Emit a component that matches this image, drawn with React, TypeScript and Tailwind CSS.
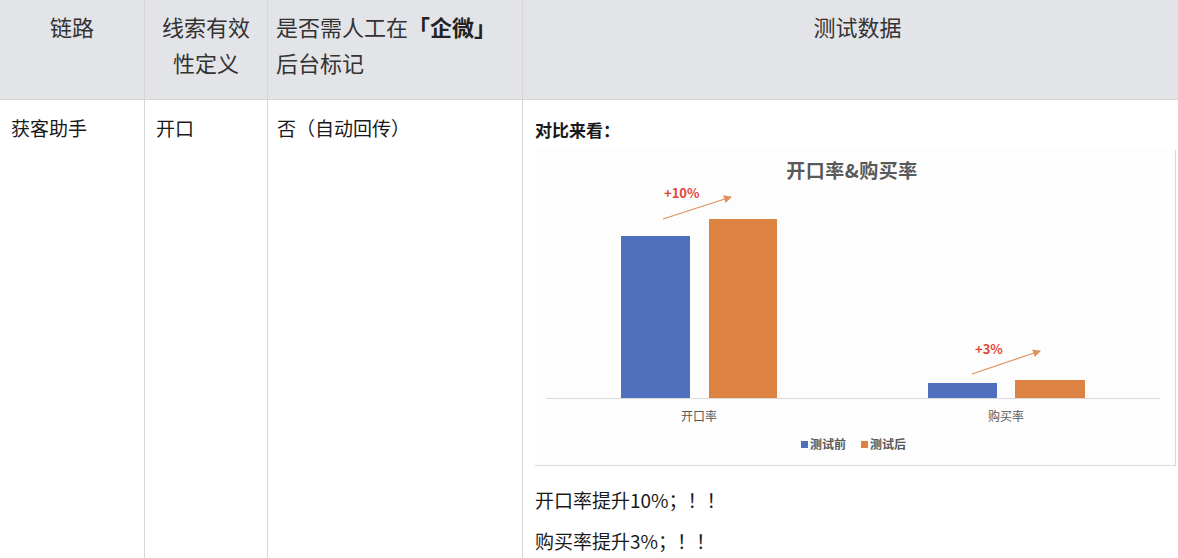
import React from "react";

const FONT = '"Noto Sans CJK SC", "Noto Sans", "Liberation Sans", sans-serif';

function Chart() {
  const gray = "#595959";
  return (
    <div className="relative h-[316px] w-[641px] border-r border-b border-[#d9d9d9] bg-[#fdfdfd]">
      <svg width="640" height="316" viewBox="0 0 640 316" style={{ fontFamily: FONT }}>
        <defs>
          <marker id="ah" markerWidth="8" markerHeight="8" refX="7" refY="4" orient="auto" markerUnits="userSpaceOnUse">
            <path d="M0,0 L8,4 L0,8 z" fill="#e0905a" />
          </marker>
        </defs>
        <text x="317" y="28" textAnchor="middle" fontSize="19" fontWeight="700" fill={gray} letterSpacing="0.5">
          开口率&amp;购买率
        </text>
        <line x1="11" y1="248.5" x2="625" y2="248.5" stroke="#d9d9d9" strokeWidth="1" />
        <rect x="86" y="86" width="69" height="162" fill="#4f71bd" />
        <rect x="174" y="69" width="68" height="179" fill="#dc8243" />
        <rect x="393" y="233" width="69" height="15" fill="#4f71bd" />
        <rect x="480" y="230" width="70" height="18" fill="#dc8243" />
        <line x1="128" y1="69" x2="196" y2="47" stroke="#e0905a" strokeWidth="1.2" markerEnd="url(#ah)" />
        <line x1="437" y1="224" x2="505" y2="201" stroke="#e0905a" strokeWidth="1.2" markerEnd="url(#ah)" />
        <text x="129" y="48" fontSize="13" fontWeight="700" fill="#e5453a">+10%</text>
        <text x="440" y="204" fontSize="13" fontWeight="700" fill="#e5453a">+3%</text>
        <text x="164" y="271" textAnchor="middle" fontSize="12" fill={gray}>开口率</text>
        <text x="471" y="271" textAnchor="middle" fontSize="12" fill={gray}>购买率</text>
        <rect x="266" y="291" width="7" height="7" fill="#4f71bd" />
        <text x="275" y="299" fontSize="12" fontWeight="700" fill={gray}>测试前</text>
        <rect x="326" y="291" width="7" height="7" fill="#dc8243" />
        <text x="335" y="299" fontSize="12" fontWeight="700" fill={gray}>测试后</text>
      </svg>
    </div>
  );
}

export default function App() {
  return (
    <div
      className="h-[558px] w-[1178px] overflow-hidden bg-white text-[#1a1a1a]"
      style={{ fontFamily: FONT }}
    >
      <div className="grid w-[1193px] grid-cols-[145px_123px_255px_670px]">
        <div className="h-[100px] border-r border-b border-[#d6d6d9] bg-[#e3e4e8] pt-[8px] text-center text-[22px] leading-[36px] text-[#333]">
          链路
        </div>
        <div className="h-[100px] border-r border-b border-[#d6d6d9] bg-[#e3e4e8] pt-[8px] text-center text-[22px] leading-[36px] text-[#333]">
          线索有效
          <br />
          性定义
        </div>
        <div className="h-[100px] border-r border-b border-[#d6d6d9] bg-[#e3e4e8] pl-[8px] pt-[8px] text-[22px] leading-[36px] text-[#333]">
          是否需人工在<span className="font-bold text-[#222]">「企微」</span>
          <br />
          后台标记
        </div>
        <div className="h-[100px] border-r border-b border-[#d6d6d9] bg-[#e3e4e8] pt-[8px] text-center text-[22px] leading-[36px] text-[#333]">
          测试数据
        </div>

        <div className="h-[458px] border-r border-[#d6d6d9] pl-[11px] pt-[14px] text-[19px] leading-[28px]">
          获客助手
        </div>
        <div className="h-[458px] border-r border-[#d6d6d9] pl-[11px] pt-[14px] text-[19px] leading-[28px]">
          开口
        </div>
        <div className="h-[458px] border-r border-[#d6d6d9] pl-[9px] pt-[14px] text-[19px] leading-[28px]">
          否（自动回传）
        </div>
        <div className="h-[458px] border-r border-[#d6d6d9] pl-[12px] pt-[16px] text-[19px] leading-[28px]">
          <div className="text-[17px] font-bold">对比来看：</div>
          <div className="mt-[6px]">
            <Chart />
          </div>
          <div className="mt-[20px]">开口率提升10%；！！</div>
          <div className="mt-[13px]">购买率提升3%；！！</div>
        </div>
      </div>
    </div>
  );
}
